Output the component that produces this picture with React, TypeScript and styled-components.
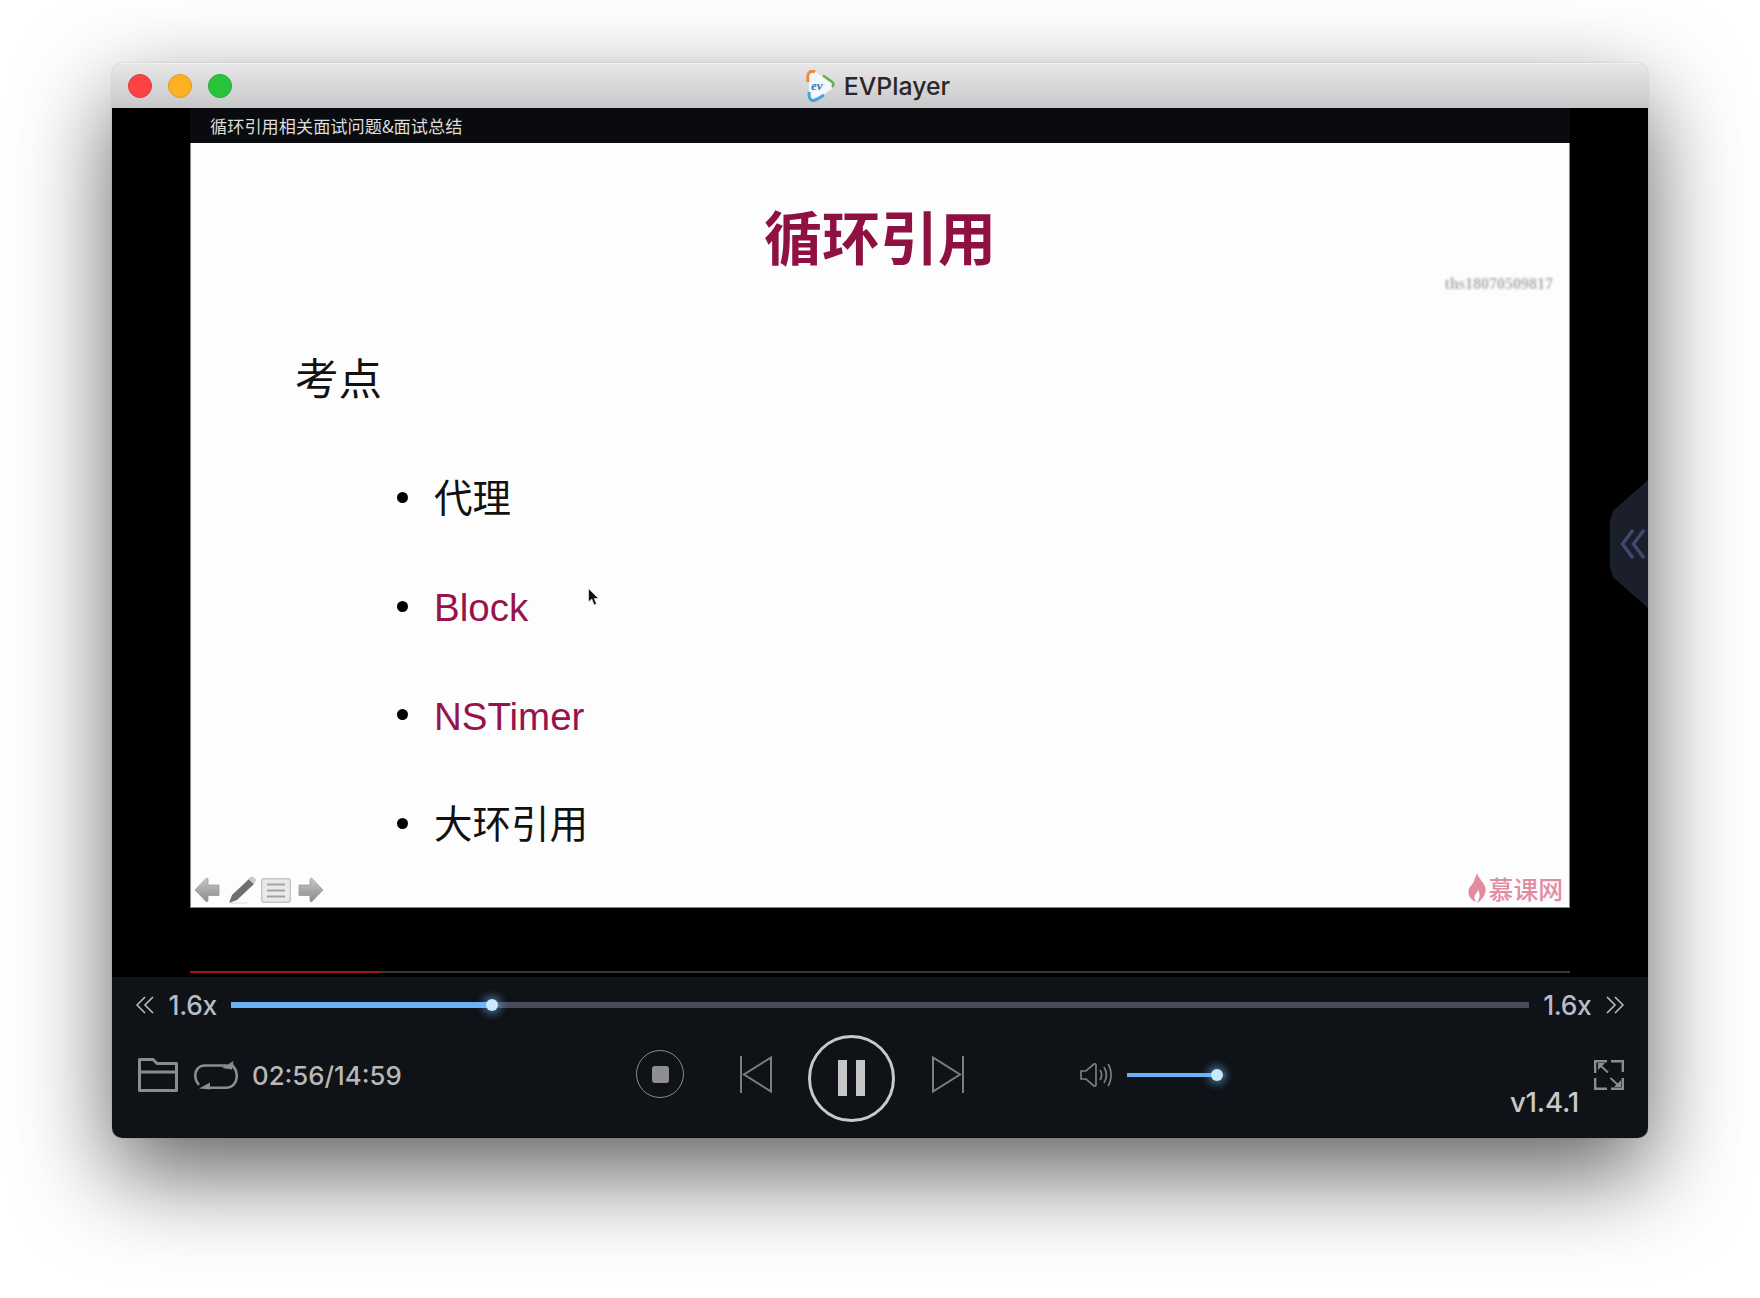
import React from "react";
import styled, { createGlobalStyle } from "styled-components";

const GlobalStyle = createGlobalStyle`
  html, body {
    margin: 0;
    padding: 0;
    background: #fff;
    height: 1298px;
    overflow: hidden;
  }
  * { box-sizing: border-box; }
  body { font-family: Inter, "Noto Sans CJK SC", sans-serif; }
`;

const Page = styled.div`
  width: 1760px;
  height: 1298px;
  padding: 63px 112px 0;
`;

const Window = styled.div`
  width: 1536px;
  height: 1075px;
  border-radius: 10px;
  overflow: hidden;
  display: flex;
  flex-direction: column;
  box-shadow: 0 36px 94px rgba(0, 0, 0, 0.62), 0 0 1px rgba(0, 0, 0, 0.5);
`;

const TitleBar = styled.div`
  height: 45px;
  flex: none;
  display: grid;
  grid-template-columns: 1fr auto 1fr;
  align-items: center;
  padding: 0 16px;
  background: linear-gradient(#e8e7e8, #c8c7c9);
  border-top: 1px solid #f2f2f2;
`;

const Lights = styled.div`
  display: flex;
  gap: 16px;
`;

const Light = styled.span<{ $color: string; $edge: string }>`
  width: 24px;
  height: 24px;
  border-radius: 50%;
  background: ${(p) => p.$color};
  border: 1px solid ${(p) => p.$edge};
`;

const AppTitle = styled.div`
  display: flex;
  align-items: center;
  gap: 9px;
  font-size: 24.8px;
  font-weight: 500;
  line-height: 32px;
  color: #2b2729;
  font-family: Inter, sans-serif;
  margin-right: 4px;
`;

const Stage = styled.div`
  position: relative;
  height: 869px;
  flex: none;
  background: #000;
  padding: 0 78px 4px;
  display: flex;
  flex-direction: column;
`;

const SlideHeader = styled.div`
  height: 35px;
  flex: none;
  background: #0a0b0e;
  color: #dcdcdc;
  font-family: "Noto Sans CJK SC", sans-serif;
  font-size: 17.2px;
  line-height: 35px;
  padding-left: 20px;
`;

const Slide = styled.div`
  position: relative;
  height: 765px;
  flex: none;
  background: #fdfdfd;
  border: 1px solid #85858a;
  border-top: 0;
  display: flex;
  flex-direction: column;
  font-family: "Noto Sans CJK SC", sans-serif;
  color: #111;
  padding-top: 63px;
`;

const SlideTitle = styled.h1`
  margin: 0;
  text-align: center;
  color: #8f1042;
  font-size: 58px;
  line-height: 58px;
  font-weight: 700;
`;

const Watermark = styled.div`
  position: absolute;
  top: 132px;
  right: 16px;
  font: bold 16px "Liberation Serif", serif;
  color: #b2b2b2;
  filter: blur(0.9px);
`;

const Heading = styled.h2`
  margin: 93px 0 0 104px;
  font-size: 43.5px;
  line-height: 40px;
  font-weight: 400;
`;

const Points = styled.ul`
  list-style: none;
  margin: 46px 0 0 206px;
  padding: 0;
  height: 400px;
`;

const Point = styled.li`
  height: 108.7px;
  display: flex;
  align-items: center;
  gap: 26px;

  &::before {
    content: "";
    width: 11px;
    height: 11px;
    border-radius: 50%;
    background: #000;
    flex: none;
  }
`;

const PointText = styled.span<{ $accent?: boolean }>`
  font-size: 38.5px;
  color: ${(p) => (p.$accent ? "#96134b" : "#111")};
  font-family: "Liberation Sans", "Noto Sans CJK SC", sans-serif;
  margin: ${(p) => (p.$accent ? "4px 0 0" : "0 0 4px")};
`;

const Cursor = styled.svg`
  position: absolute;
  left: 397px;
  top: 445px;
`;

const SlideFooter = styled.div`
  margin-top: auto;
  display: flex;
  align-items: center;
  justify-content: space-between;
  padding: 0 6px 0 3px;
`;

const SlideTools = styled.div`
  display: flex;
  align-items: center;
`;

const ToolSlot = styled.span<{ $gap: number }>`
  display: flex;
  margin-left: ${(p) => p.$gap}px;
`;

const Brand = styled.div`
  display: flex;
  align-items: center;
  gap: 3px;
  color: #e28ca3;
  font-size: 24.8px;
  line-height: 30px;
  font-weight: 500;
  margin-bottom: 4px;
`;

const ProgressLine = styled.div`
  margin-top: auto;
  height: 2px;
  flex: none;
  background: #38383a;
`;

const ProgressFill = styled.div`
  height: 100%;
  background: #a3151f;
`;

const SideTab = styled.div`
  position: absolute;
  right: 0;
  top: 372px;
  width: 38px;
  height: 128px;
  background: #1a1f2b;
  clip-path: polygon(100% 0, 100% 100%, 8% 76%, 0 68%, 0 32%, 8% 24%);
  display: flex;
  align-items: center;
  justify-content: flex-end;
  padding-right: 2px;
`;

const Controls = styled.div`
  flex: 1;
  background: #0f1217;
  padding: 0 24px;
  display: flex;
  flex-direction: column;
`;

const SpeedRow = styled.div`
  height: 56px;
  display: flex;
  align-items: center;
  gap: 14.5px;
`;

const SpeedLabel = styled.span`
  font-size: 26.4px;
  font-weight: 500;
  color: #b7bcc5;
  line-height: 1;
  letter-spacing: -0.3px;
`;

const Track = styled.div<{ $height: number; $bg: string }>`
  position: relative;
  flex: 1;
  height: ${(p) => p.$height}px;
  background: ${(p) => p.$bg};
`;

const TrackFill = styled.div`
  height: 100%;
  background: #6cb2fa;
`;

const Knob = styled.span`
  position: absolute;
  top: 50%;
  width: 12px;
  height: 12px;
  border-radius: 50%;
  background: #c8e8fc;
  box-shadow: 0 0 8px 3px rgba(120, 190, 250, 0.55);
  transform: translate(-50%, -50%);
`;

const ButtonRow = styled.div`
  height: 84px;
  display: flex;
  align-items: center;
`;

const LeftGroup = styled.div`
  flex: 0 0 500px;
  display: flex;
  align-items: center;
  padding-left: 2px;
`;

const TimeText = styled.span`
  margin-left: 14px;
  font-size: 25.8px;
  font-weight: 500;
  color: #b8b8b8;
`;

const Transport = styled.div`
  display: flex;
  align-items: center;
  margin-top: -2px;
`;

const StopButton = styled.div`
  width: 48px;
  height: 48px;
  margin-right: 56px;
  border-radius: 50%;
  border: 1.5px solid #8a8a8a;
  display: flex;
  align-items: center;
  justify-content: center;

  &::after {
    content: "";
    width: 17px;
    height: 17px;
    border-radius: 3px;
    background: #8e8e8e;
  }
`;

const PauseButton = styled.div`
  width: 87px;
  height: 87px;
  margin: 8px 37px 0 36px;
  border-radius: 50%;
  border: 3px solid #c9c9c9;
  display: flex;
  align-items: center;
  justify-content: center;
  gap: 9px;

  span {
    width: 9px;
    height: 36px;
    background: #c6c6c6;
  }
`;

const VolumeGroup = styled.div`
  margin-left: 116px;
  display: flex;
  align-items: center;
  gap: 14px;
`;

const VolumeTrack = styled(Track)`
  flex: none;
  width: 99px;
`;

const Version = styled.span`
  margin: 54px 15px 0 auto;
  font-size: 27.6px;
  font-weight: 500;
  line-height: 29px;
  color: #c9c9c9;
  letter-spacing: -0.2px;
`;

const DoubleChevron = ({ dir }: { dir: "left" | "right" }) => (
  <svg width="18" height="18" viewBox="0 0 18 18" fill="none" stroke="#c2c2c2" strokeWidth="1.5">
    <g transform={dir === "right" ? "matrix(-1 0 0 1 18 0)" : undefined}>
      <path d="M9 1 L1 9 L9 17" />
      <path d="M17 1 L9 9 L17 17" />
    </g>
  </svg>
);

const FolderIcon = () => (
  <svg width="40" height="34" viewBox="0 0 40 34" fill="none" stroke="#8c8c8c" strokeWidth="3" strokeLinejoin="round">
    <path d="M1.5 32.5 V1.5 H15 L19 5.5 H38.5 V32.5 Z" />
    <path d="M1.5 14 H38.5" />
  </svg>
);

const LoopIcon = () => (
  <svg width="44" height="29" viewBox="0 0 44 29" fill="none" style={{ marginLeft: 16 }}>
    <path
      d="M33 4.5 H11 C4 4.5 1.2 10 1.2 15 C1.2 18.5 2.8 21.5 5 24 M12 26.8 H32 C39 26.8 42.8 21 42.8 15 C42.8 11 41 7 38 4"
      stroke="#8c8c8c"
      strokeWidth="2.6"
    />
    <path d="M28 7 L39.5 0 L38 8.5 Z M16 21.5 V28.5 L5 27.5 Z" fill="#8c8c8c" />
  </svg>
);

const SkipIcon = ({ dir }: { dir: "prev" | "next" }) => (
  <svg width="32" height="37" viewBox="0 0 32 37" fill="none" stroke="#7d7d7d" strokeWidth="2">
    <g transform={dir === "next" ? "matrix(-1 0 0 1 32 0)" : undefined}>
      <path d="M1 0 V37" />
      <path d="M31 1.5 V35.5 L4 18.5 Z" />
    </g>
  </svg>
);

const VolumeIcon = () => (
  <svg width="33" height="26" viewBox="0 0 33 26" fill="none" stroke="#7d7d7d" strokeWidth="1.7">
    <path d="M1 9 H6 L14 2 C15 1.5 16 2 16 3 V23 C16 24 15 24.5 14 24 L6 17 H1 Z" />
    <path d="M20 8 C22 11 22 15 20 18" />
    <path d="M24 5 C27 10 27 16 24 21" />
    <path d="M28 2 C32 8 32 18 28 24" />
  </svg>
);

const FullscreenIcon = () => (
  <svg width="30" height="30" viewBox="0 0 30 30" fill="none" stroke="#8c8c8c" strokeWidth="2.4">
    <path d="M13 1.2 H1.2 V13" />
    <path d="M17 1.2 H28.8 V12" />
    <path d="M1.2 18 V28.8 H13" />
    <path d="M17 28.8 H28.8 V18" />
    <path d="M7 6 L14 12.5" strokeWidth="1.8" />
    <path d="M16.5 18 L24 25" strokeWidth="1.8" />
    <path d="M4 3 H11 L4 10 Z M27 27 H20 L27 20 Z" fill="#8c8c8c" stroke="none" />
  </svg>
);

const AppLogo = () => (
  <svg width="29" height="32" viewBox="0 0 29 32">
    <path d="M3 3 C3 0.5 6 0 8 1 L26 12.5 C29 14.5 29 17 26 19 L9 30.5 C6 32 3 31 3 28 Z" fill="#f5f6f7" />
    <path d="M2 12 C1.5 8 2 3 4 2 C6 0.5 7.5 1 9 2" fill="none" stroke="#ee8a3c" strokeWidth="3" />
    <path d="M17 5.5 L25.5 11.5 C28 13.5 28 15 26 17" fill="none" stroke="#62b04a" strokeWidth="2.6" />
    <path d="M3 22 C3 27 3.5 31 8 30.5 C12 29 15 27 18 25" fill="none" stroke="#41a5e0" strokeWidth="3" />
    <text x="5" y="20" fontFamily="'Liberation Serif', serif" fontStyle="italic" fontWeight="700" fontSize="13" fill="#2f7fc0">
      ev
    </text>
  </svg>
);

const ToolArrow = ({ dir, id }: { dir: "left" | "right"; id: string }) => (
  <svg width="26" height="26" viewBox="0 0 26 26">
    <defs>
      <linearGradient id={id} x1="0" y1="0" x2="0" y2="1">
        <stop offset="0" stopColor="#c6c6c6" />
        <stop offset="1" stopColor="#8b8b8b" />
      </linearGradient>
    </defs>
    <g transform={dir === "right" ? "matrix(-1 0 0 1 26 0)" : undefined}>
      <path d="M12.5 1 L1 13 L12.5 25 L14 24 V18.5 H25 V8 H14 V2 Z" fill={`url(#${id})`} stroke="#9a9a9a" strokeWidth="0.8" />
    </g>
  </svg>
);

const PenIcon = () => (
  <svg width="29" height="28" viewBox="0 0 29 28">
    <path d="M1 27 L4 19 L21 3 L26 8 L9 24 Z" fill="#6f6f6f" />
    <path d="M20 3 L23 0.8 C25 0 28 2.5 28 4.5 L26 8 Z" fill="#c9c9c9" />
    <path d="M1 27 L20 27" stroke="#dcdcdc" strokeWidth="1" />
  </svg>
);

const ListIcon = () => (
  <svg width="30" height="25" viewBox="0 0 30 25">
    <rect x="0.7" y="0.7" width="28.6" height="23.6" rx="2" fill="#e9e9e9" stroke="#c4c4c4" strokeWidth="1.4" />
    <path d="M6 6.5 H24 M6 12.5 H24 M6 18.5 H24" stroke="#a3a3a3" strokeWidth="2" />
  </svg>
);

const FlameIcon = () => (
  <svg width="18" height="30" viewBox="0 0 18 30">
    <path
      d="M9 0 C10 5 16 9 17.5 15 C18.5 21 14 27 9 30 C12 25 12.5 21 10 17 C9 20 7 21 6.5 24 C6.5 26 7 27 8 29 C3 27 0 23 0.5 18 C1 13 5 12 6 8 C7 5 8 3 9 0 Z"
      fill="#e48a9f"
    />
  </svg>
);

const App = () => {
  return (
    <Page>
      <GlobalStyle />
      <Window>
        <TitleBar>
          <Lights>
            <Light $color="#fc4346" $edge="#dc3a3d" />
            <Light $color="#fdb024" $edge="#dd9a20" />
            <Light $color="#2ac33c" $edge="#25a834" />
          </Lights>
          <AppTitle>
            <AppLogo />
            EVPlayer
          </AppTitle>
        </TitleBar>

        <Stage>
          <SlideHeader>循环引用相关面试问题&amp;面试总结</SlideHeader>
          <Slide>
            <SlideTitle>循环引用</SlideTitle>
            <Watermark>ths18070509817</Watermark>
            <Heading>考点</Heading>
            <Points>
              <Point><PointText>代理</PointText></Point>
              <Point><PointText $accent>Block</PointText></Point>
              <Point><PointText $accent>NSTimer</PointText></Point>
              <Point><PointText>大环引用</PointText></Point>
            </Points>
            <Cursor width="11" height="18" viewBox="0 0 11 18">
              <path d="M0.5 0.5 V14 L3.8 11 L6 17 L8.5 16 L6.3 10.5 H10.5 Z" fill="#111" stroke="#fff" strokeWidth="0.6" />
            </Cursor>
            <SlideFooter>
              <SlideTools>
                <ToolArrow dir="left" id="toolBack" />
                <ToolSlot $gap={8}><PenIcon /></ToolSlot>
                <ToolSlot $gap={4}><ListIcon /></ToolSlot>
                <ToolSlot $gap={7}><ToolArrow dir="right" id="toolNext" /></ToolSlot>
              </SlideTools>
              <Brand>
                <FlameIcon />
                慕课网
              </Brand>
            </SlideFooter>
          </Slide>
          <ProgressLine>
            <ProgressFill style={{ width: `${(190 / 1380) * 100}%` }} />
          </ProgressLine>
          <SideTab>
            <svg width="26" height="32" viewBox="0 0 26 32" fill="none" stroke="#3e4b6e" strokeWidth="3.4">
              <path d="M13 2 L2.5 16 L13 30" />
              <path d="M24 2 L13.5 16 L24 30" />
            </svg>
          </SideTab>
        </Stage>

        <Controls>
          <SpeedRow>
            <DoubleChevron dir="left" />
            <SpeedLabel>1.6x</SpeedLabel>
            <Track $height={6} $bg="#464c5b">
              <TrackFill style={{ width: "20.06%" }} />
              <Knob style={{ left: "20.06%" }} />
            </Track>
            <SpeedLabel>1.6x</SpeedLabel>
            <DoubleChevron dir="right" />
          </SpeedRow>

          <ButtonRow>
            <LeftGroup>
              <FolderIcon />
              <LoopIcon />
              <TimeText>02:56/14:59</TimeText>
            </LeftGroup>
            <Transport>
              <StopButton />
              <SkipIcon dir="prev" />
              <PauseButton>
                <span />
                <span />
              </PauseButton>
              <SkipIcon dir="next" />
            </Transport>
            <VolumeGroup>
              <VolumeIcon />
              <VolumeTrack $height={4} $bg="#1a1e26">
                <TrackFill style={{ width: "91%" }} />
                <Knob style={{ left: "91%" }} />
              </VolumeTrack>
            </VolumeGroup>
            <Version>v1.4.1</Version>
            <FullscreenIcon />
          </ButtonRow>
        </Controls>
      </Window>
    </Page>
  );
};

export default App;
